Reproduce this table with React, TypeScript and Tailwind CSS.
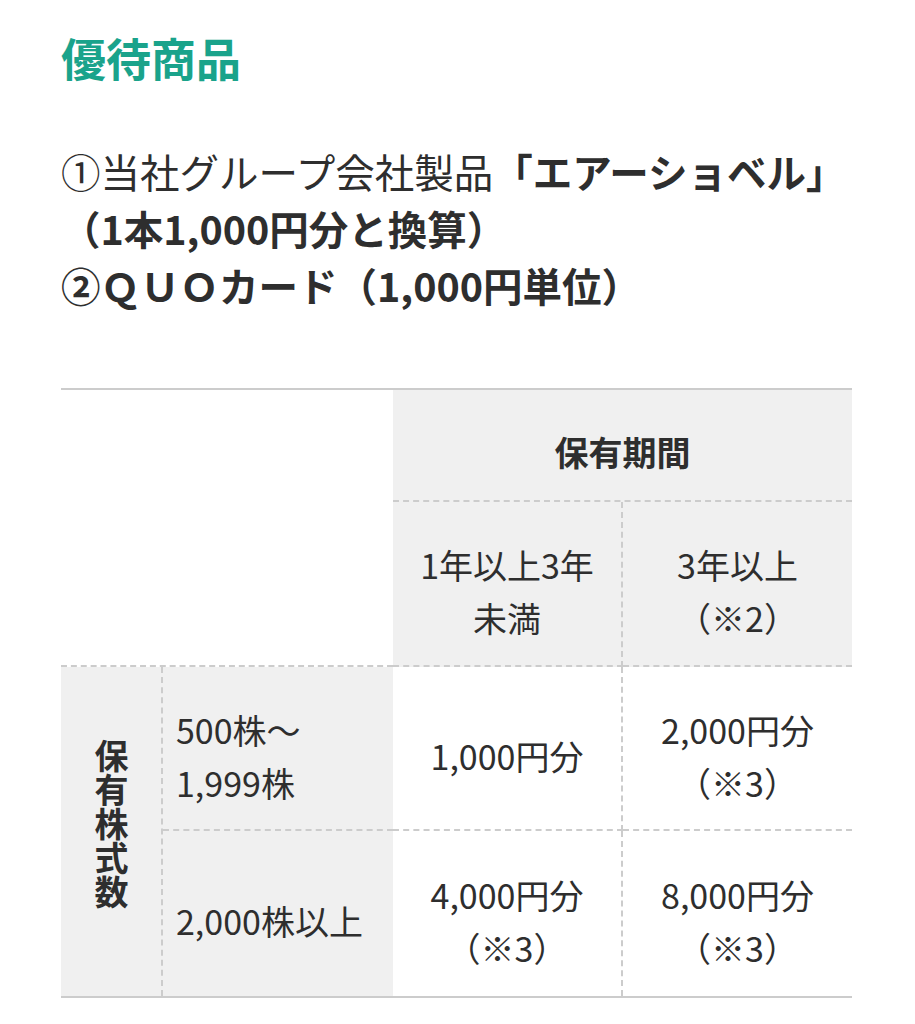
const font = "font-['Noto_Sans_CJK_JP','Noto_Sans',sans-serif]";

const dash = "border-dashed border-[#cccccc]";

const App = () => {
  return (
    <div className={`${font} bg-white text-[#2e2e2e] px-[61px] pt-[26px] pb-[40px] w-[915px]`}>
      <h2 className="text-[45px] leading-[64px] font-bold text-[#1aa38b]">優待商品</h2>

      <p className="mt-[52px] text-[39.5px] leading-[57px]">
        ①当社グループ会社製品<span className="font-bold">「エアーショベル」（1本1,000円分と換算）</span>
        <br />
        <span className="font-bold">②ＱＵＯカード（1,000円単位）</span>
      </p>

      <div className="mt-[75px] w-[791px] border-t-2 border-b-2 border-[#cccccc] grid grid-cols-[102px_230px_230px_229px] grid-rows-[112px_165px_164px_165px] text-[34px] leading-[53px] text-center">
        <div className={`col-span-2 row-span-2 bg-white border-b-2 ${dash}`} />
        <div className={`col-span-2 bg-[#f0f0f0] border-b-2 ${dash} flex items-center justify-center font-bold pt-[12px]`}>
          保有期間
        </div>
        <div className={`bg-[#f0f0f0] border-r-2 border-b-2 ${dash} flex items-center justify-center pt-[14px]`}>
          <span>
            1年以上3年
            <br />
            未満
          </span>
        </div>
        <div className={`bg-[#f0f0f0] border-b-2 ${dash} flex items-center justify-center pt-[14px]`}>
          <span>
            3年以上
            <br />
            （※2）
          </span>
        </div>

        <div className={`row-span-2 bg-[#f0f0f0] border-r-2 ${dash} flex items-center justify-center font-bold pb-[16px]`}>
          <span className="[writing-mode:vertical-rl] leading-[34px]">保有株式数</span>
        </div>
        <div className={`bg-[#f0f0f0] border-b-2 ${dash} flex items-center pl-[13px] text-left pt-[16px]`}>
          <span>
            500株〜
            <br />
            1,999株
          </span>
        </div>
        <div className={`border-r-2 border-b-2 ${dash} flex items-center justify-center pt-[14px]`}>1,000円分</div>
        <div className={`border-b-2 ${dash} flex items-center justify-center pt-[16px]`}>
          <span>
            2,000円分
            <br />
            （※3）
          </span>
        </div>

        <div className="bg-[#f0f0f0] flex items-center pl-[13px] text-left pt-[14px]">2,000株以上</div>
        <div className={`border-r-2 ${dash} flex items-center justify-center pt-[14px]`}>
          <span>
            4,000円分
            <br />
            （※3）
          </span>
        </div>
        <div className="flex items-center justify-center pt-[14px]">
          <span>
            8,000円分
            <br />
            （※3）
          </span>
        </div>
      </div>
    </div>
  );
};

export default App;
